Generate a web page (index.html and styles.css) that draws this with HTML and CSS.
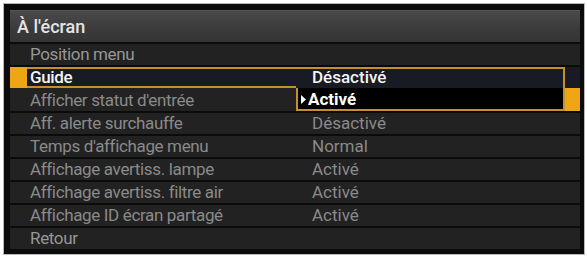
FILE: index.html
```html
<!DOCTYPE html>
<html lang="fr">
<head>
<meta charset="utf-8">
<title>À l'écran</title>
<link rel="stylesheet" href="styles.css">
</head>
<body>
<div class="osd">
  <div class="title">À l'écran</div>
  <div class="rows">
    <div class="row"><span class="lbl dim">Position menu</span></div>
    <div class="row sel">
      <span class="mark"></span>
      <span class="lbl">Guide</span>
      <span class="val">Désactivé</span>
    </div>
    <div class="row drop">
      <span class="lbl">Afficher statut d'entrée</span>
      <span class="val"><svg class="tri" width="5" height="9" viewBox="0 0 5 9"><path d="M0 0 L5 4.5 L0 9 Z" fill="#fff"/></svg>Activé</span>
      <span class="mark"></span>
    </div>
    <div class="row"><span class="lbl">Aff. alerte surchauffe</span><span class="val">Désactivé</span></div>
    <div class="row"><span class="lbl">Temps d'affichage menu</span><span class="val">Normal</span></div>
    <div class="row"><span class="lbl">Affichage avertiss. lampe</span><span class="val">Activé</span></div>
    <div class="row"><span class="lbl">Affichage avertiss. filtre air</span><span class="val">Activé</span></div>
    <div class="row"><span class="lbl">Affichage ID écran partagé</span><span class="val">Activé</span></div>
    <div class="row"><span class="lbl dim">Retour</span></div>
  </div>
</div>
</body>
</html>
```
FILE: styles.css
```css
html, body {
  margin: 0;
  background: #ffffff;
}
body {
  font-family: Roboto, "DejaVu Sans", sans-serif;
}
.osd {
  margin: 3px 0 0 3px;
  width: 582px;
  box-sizing: border-box;
  border: 1px solid #b8b8b8;
  background: #0b0b0b;
  padding: 6px 4px 5px 6px;
}
.title {
  height: 32px;
  box-sizing: border-box;
  padding-left: 7px;
  line-height: 31px;
  font-size: 18px;
  font-weight: 500;
  color: #e4e4e4;
  background: linear-gradient(#4a4a4a, #3a3a3a 60%, #353535);
  border-top: 1px solid #555;
}
.rows {
  display: flex;
  flex-direction: column;
  gap: 2px;
  padding-top: 2px;
  background: #0b0b0b;
}
.row {
  display: grid;
  grid-template-columns: 17px 269px 269px 15px;
  height: 21px;
  background: #222222;
  font-size: 17px;
  line-height: 21px;
  color: #8a8a8a;
  white-space: nowrap;
}
.lbl {
  grid-column: 2;
  padding-left: 3px;
  letter-spacing: -0.35px;
}
.lbl.dim {
  color: #979797;
}
.val {
  grid-column: 3;
  padding-left: 16px;
}
.sel {
  background: #181a24;
}
.sel .mark {
  grid-column: 1;
  background: #eea614;
}
.sel .lbl,
.sel .val {
  color: #f4f4f4;
  box-sizing: border-box;
  border-top: 2px solid #c2912c;
  line-height: 17px;
  font-weight: 500;
}
.sel .lbl {
  border-bottom: 2px solid #c2912c;
}
.sel .val {
  border-right: 2px solid #c2912c;
}
.drop {
  margin-top: -2px;
  height: 23px;
  line-height: 21px;
}
.drop .lbl {
  padding-top: 2px;
  line-height: 21px;
}
.drop .val {
  background: #000000;
  box-sizing: border-box;
  border: 2px solid #c2912c;
  border-top: none;
  padding-left: 3px;
  padding-top: 2px;
  line-height: 19px;
  color: #ffffff;
  font-weight: 700;
  display: flex;
  align-items: center;
}
.drop .tri {
  margin-right: 2px;
}
.drop .mark {
  grid-column: 4;
  background: #eea614;
}
```
